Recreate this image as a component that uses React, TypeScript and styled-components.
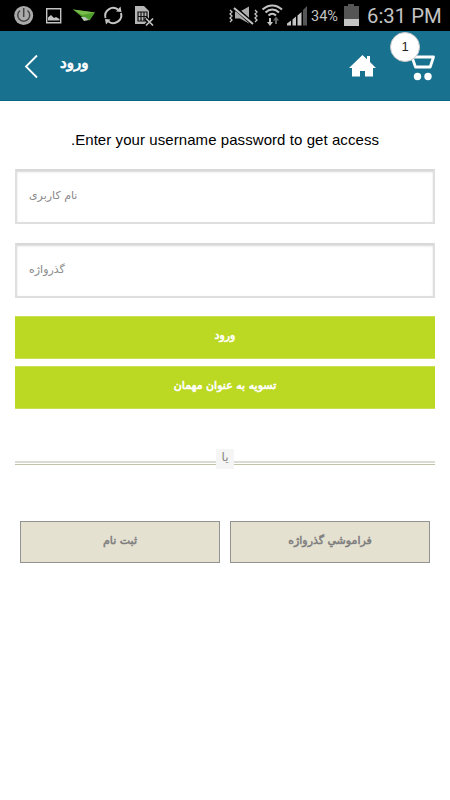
import React from "react";
import styled, { createGlobalStyle } from "styled-components";

const GlobalStyle = createGlobalStyle`
  * { box-sizing: border-box; }
  body { margin: 0; background: #fff; }
`;

const Screen = styled.div`
  width: 450px;
  height: 800px;
  background: #fff;
  overflow: hidden;
  font-family: "DejaVu Sans", sans-serif;
`;

const StatusBar = styled.div`
  height: 31px;
  background: #000;
  display: flex;
  justify-content: space-between;
  font-family: Roboto, sans-serif;
  color: #c4c4c4;
  svg { display: block; flex: none; }
`;

const StatusSide = styled.div`
  display: flex;
  align-items: center;
  height: 31px;
`;

const Battery = styled.span`
  font-size: 14.5px;
  line-height: 31px;
  width: 29px;
  padding-top: 1px;
  margin-right: 4px;
  white-space: nowrap;
`;

const Clock = styled.span`
  font-size: 20.3px;
  line-height: 31px;
  width: 75px;
  padding-top: 1px;
  margin: 0 8px 0 8px;
  white-space: nowrap;
`;

const Header = styled.header`
  height: 70px;
  background: #18718f;
  border-bottom: 1px solid #0b6586;
  display: flex;
  align-items: flex-start;
  padding: 0 14px 0 24px;
`;

const BackIcon = styled.svg`
  display: block;
  margin-top: 23px;
`;

const Title = styled.h1`
  margin: 20px auto 0 21px;
  font-size: 15px;
  line-height: 24px;
  font-weight: 400;
  color: #fff;
  -webkit-text-stroke: 0.8px currentColor;
`;

const HomeIcon = styled.svg`
  display: block;
  margin: 23px 35px 0 0;
`;

const Cart = styled.div`
  position: relative;
  width: 25px;
  height: 70px;
  padding-top: 24px;
  svg { display: block; margin-left: -1px; }
`;

const Badge = styled.span`
  position: absolute;
  left: -21px;
  top: 1px;
  width: 30px;
  height: 30px;
  border-radius: 50%;
  border: 1px solid #c9c9c9;
  background: #fff;
  color: #222;
  font: 13px/28px "Liberation Sans", sans-serif;
  text-align: center;
`;

const Content = styled.main`
  display: flex;
  flex-direction: column;
  padding: 28px 15px 0;
`;

const Prompt = styled.p`
  margin: 0 0 18px;
  font: 15px/22px "Liberation Sans", sans-serif;
  letter-spacing: 0.07px;
  color: #000;
  text-align: center;
  white-space: nowrap;
`;

const Field = styled.input`
  display: block;
  width: 100%;
  height: 55px;
  margin: 0 0 19px;
  padding: 0 12px 2px;
  border: 2px solid #dfdfdf;
  border-top-color: #d8d8d8;
  border-radius: 0;
  outline: none;
  box-shadow: inset 0 1px 2px #d8d8d8;
  background: #fff;
  font: 11px "DejaVu Sans", sans-serif;
  text-align: left;
  &::placeholder { color: #888; opacity: 1; }
`;

const Actions = styled.div`
  display: grid;
  gap: 7px;
  margin-top: -1px;
`;

const PrimaryButton = styled.button`
  height: 43px;
  padding: 0 0 4px;
  border: 0 solid #c9e054;
  border-width: 1px 0;
  background: #bbd822;
  color: #fff;
  font: 400 11px/20px "DejaVu Sans", sans-serif;
  -webkit-text-stroke: 0.6px currentColor;
`;

const Divider = styled.div`
  display: flex;
  align-items: center;
  height: 20px;
  margin-top: 40px;
`;

const Rule = styled.i`
  flex: 1;
  height: 4px;
  margin-top: 8px;
  border-top: 2px solid #dadbd3;
  border-bottom: 1px solid #c3c3aa;
`;

const DividerLabel = styled.span`
  width: 18px;
  height: 20px;
  background: #f5f5f5;
  color: #858585;
  font-size: 12px;
  line-height: 17px;
  text-align: center;
`;

const SecondaryRow = styled.div`
  display: grid;
  grid-template-columns: 200px 200px;
  gap: 10px;
  padding: 0 5px;
  margin-top: 52px;
`;

const SecondaryButton = styled.button`
  height: 42px;
  padding: 0 0 3px;
  border: 1px solid #929292;
  background: #e4e1d1;
  color: #7d7d7d;
  font: 400 11px/20px "DejaVu Sans", sans-serif;
  -webkit-text-stroke: 0.5px currentColor;
`;

const NotificationIcons = () => (
  <svg width="160" height="31" viewBox="0 0 160 31" fill="none">
    <circle cx="23.700" cy="15.500" r="9.500" fill="#aaa" />
    <path d="M20 10.500a6 6 0 1 0 7.500 0M23.700 8v9" stroke="#444" strokeWidth="1.500" />
    <path d="M46.700 8.700h14v14h-14z" stroke="#c4c4c4" strokeWidth="1.400" />
    <path d="M48 20.500v-3l3-2.500 3 3 2-1 3.500 2v1.500z" fill="#c4c4c4" />
    <path d="M73 9.500 95 12.500 89.500 20.500 82 17z" fill="#4f9d2d" />
    <path d="M73 9.500 95 12.500 82 15z" fill="#79bd4c" />
    <path d="M81 17 84 21l5-1-4-3z" fill="#b8c8b8" />
    <path d="M105.500 18a8 8 0 0 1 12.500-8.500M121 13a8 8 0 0 1-12.500 8.500" stroke="#c4c4c4" strokeWidth="2" />
    <path d="m116 11.500 5.500.5-1-5.500zM110.500 19.500 105 19l1 5.500z" fill="#c4c4c4" />
    <path d="M135 6h9l5 5v13h-14z" fill="#b5b5b5" />
    <path d="M138 12h9v9h-9zM138 16.500h9M141 12v9M144 12v9" stroke="#111" strokeWidth="1.200" />
    <path d="m145.500 18 8 8m0-8-8 8" stroke="#000" strokeWidth="4" />
    <path d="m146 18.500 7 7m0-7-7 7" stroke="#c4c4c4" strokeWidth="1.700" />
  </svg>
);

const SignalIcons = () => (
  <svg width="83" height="31" viewBox="228 0 83 31" fill="none">
    <path d="m230 10 2 2-2 2 2 2-2 2 2 2-2 2M255 10l2 2-2 2 2 2-2 2 2 2-2 2" stroke="#c4c4c4" strokeWidth="1.300" />
    <path d="M235 11.500h5l9-5v17l-9-5h-5z" fill="#aaa" />
    <path d="m234 7 19 17" stroke="#000" strokeWidth="4" />
    <path d="m234 8 19 16" stroke="#c4c4c4" strokeWidth="2" />
    <path d="M262.500 9.500c6-5.500 13.500-5.500 19.500 0M265.500 12.500c4-4 9.500-4 13.500 0M268.500 15.500c2.500-2.500 5-2.500 7.500 0" stroke="#c4c4c4" strokeWidth="2" />
    <path d="M270 18v6" stroke="#c4c4c4" strokeWidth="2" />
    <path d="m267 22 3 4 3-4z" fill="#c4c4c4" />
    <path d="M276 24v-5" stroke="#666" strokeWidth="2" />
    <path d="m273 20.500 3-4 3 4z" fill="#666" />
    <path d="M287 25.500v-2l4-3v5zM292.500 19.500l3.500-3v9h-3.500zM297.500 15.500l4-3.500v13.500h-4z" fill="#c4c4c4" />
    <path d="m303 10 4-4v19.500h-4z" fill="#555" />
  </svg>
);

export default function App() {
  return (
    <Screen>
      <GlobalStyle />
      <StatusBar>
        <StatusSide><NotificationIcons /></StatusSide>
        <StatusSide>
          <SignalIcons />
          <Battery>34%</Battery>
          <svg width="15" height="31" viewBox="0 0 15 31">
            <path d="M0 6h4V4h6v2h5v13H0z" fill="#555" />
            <path d="M0 19h15v7H0z" fill="#c4c4c4" />
          </svg>
          <Clock>6:31 PM</Clock>
        </StatusSide>
      </StatusBar>
      <Header>
        <BackIcon width="15" height="25" viewBox="0 0 15 25" fill="none">
          <path d="M13 1.500 2 12.500l11 11" stroke="#fff" strokeWidth="1.800" />
        </BackIcon>
        <Title dir="rtl">ورود</Title>
        <HomeIcon width="27" height="24" viewBox="0 0 27 24" fill="#fff">
          <path d="M13.500 1 18 5.200V2h3v6l6 6h-3v8.500h-8V17h-5v5.500H3V14H0z" />
        </HomeIcon>
        <Cart>
          <svg width="26" height="26" viewBox="0 0 26 26" fill="none">
            <path d="M1 2h22.500l-3.300 10H5.500L2 2" stroke="#fff" strokeWidth="2.800" strokeLinejoin="round" />
            <circle cx="7.500" cy="21.500" r="3.700" fill="#fff" />
            <circle cx="18" cy="21.500" r="3.700" fill="#fff" />
          </svg>
          <Badge>1</Badge>
        </Cart>
      </Header>
      <Content>
        <Prompt>.Enter your username password to get access</Prompt>
        <Field placeholder="نام کاربری" />
        <Field placeholder="گذرواژه" type="text" />
        <Actions>
          <PrimaryButton dir="rtl">ورود</PrimaryButton>
          <PrimaryButton dir="rtl">تسویه به عنوان مهمان</PrimaryButton>
        </Actions>
        <Divider>
          <Rule />
          <DividerLabel>یا</DividerLabel>
          <Rule />
        </Divider>
        <SecondaryRow>
          <SecondaryButton dir="rtl">ثبت نام</SecondaryButton>
          <SecondaryButton dir="rtl">فراموشي گذرواژه</SecondaryButton>
        </SecondaryRow>
      </Content>
    </Screen>
  );
}
